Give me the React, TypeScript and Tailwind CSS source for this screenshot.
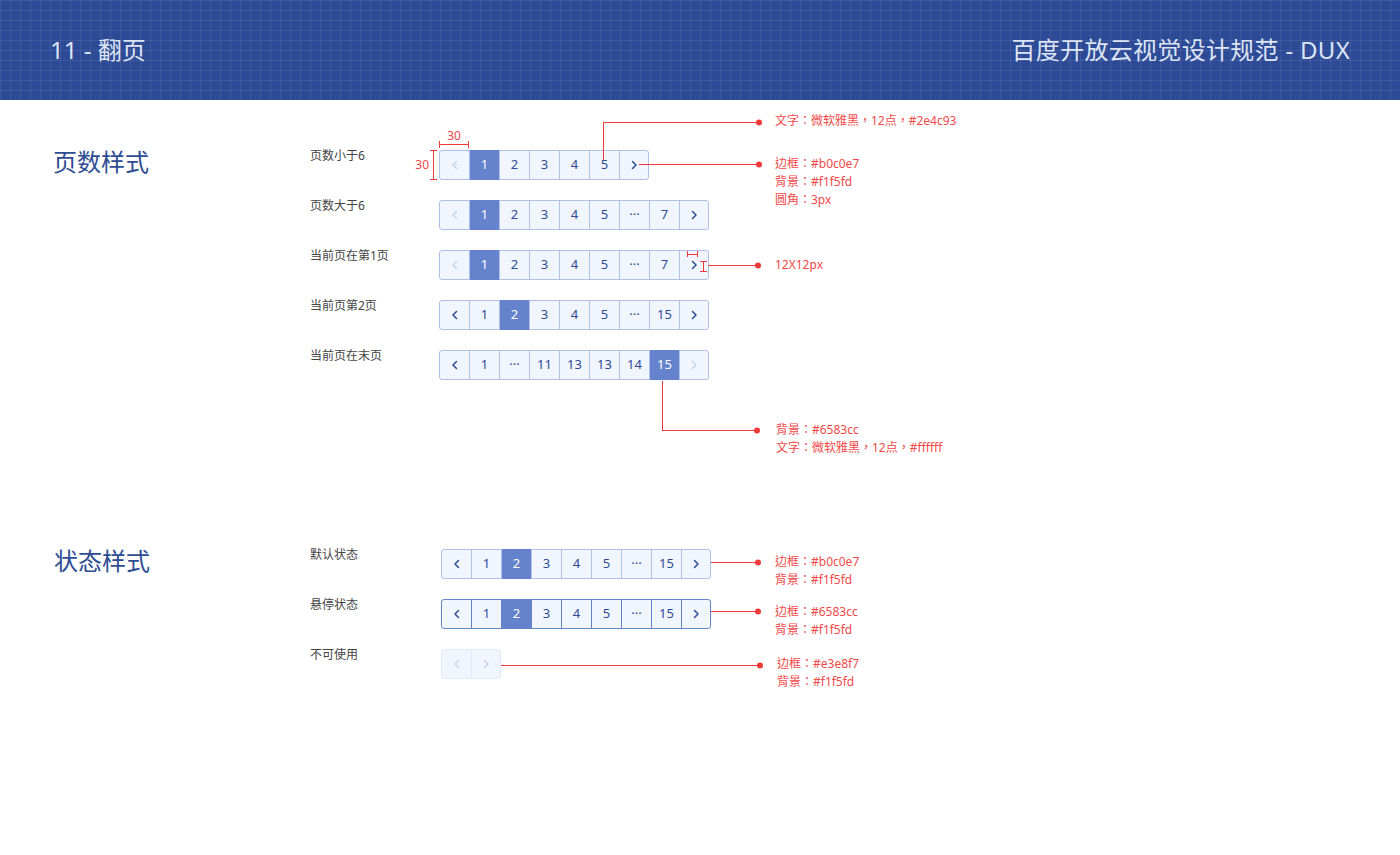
import React from 'react';

type Cell = {
  label?: string;
  arrow?: 'prev' | 'next';
  active?: boolean;
  disabled?: boolean;
};

const FONT = { fontFamily: '"Noto Sans", "Noto Sans CJK SC", sans-serif' };
const NOTE_FONT = { fontFamily: '"Noto Sans", "Noto Sans CJK TC", sans-serif' };
const RED = '#f03a3a';

function Chevron({ dir, disabled }: { dir: 'prev' | 'next'; disabled?: boolean }) {
  const pts = dir === 'next' ? '4.5,2.5 8,6 4.5,9.5' : '7.5,2.5 4,6 7.5,9.5';
  return (
    <svg width="12" height="12" viewBox="0 0 12 12">
      <polyline
        points={pts}
        fill="none"
        stroke={disabled ? '#c9d3ef' : '#2e4c93'}
        strokeWidth="1.5"
        strokeLinecap="round"
        strokeLinejoin="round"
      />
    </svg>
  );
}

function Pager({ cells, border = 'border-[#b0c0e7]' }: { cells: Cell[]; border?: string }) {
  return (
    <div className={`flex h-[30px] rounded-[3px] border bg-[#f1f5fd] ${border}`}>
      {cells.map((c, i) => (
        <div
          key={i}
          className={`flex items-center justify-center text-[13px] ${
            i === 0 ? 'w-[29px]' : i === cells.length - 1 ? `w-[29px] border-l ${border}` : `w-[30px] border-l ${border}`
          } ${
            c.active
              ? '-my-px h-[30px] border-[#6583cc] bg-[#6583cc] text-white'
              : 'h-[28px] text-[#2e4c93]'
          }`}
        >
          {c.arrow ? <Chevron dir={c.arrow} disabled={c.disabled} /> : c.label}
        </div>
      ))}
    </div>
  );
}

const n = (label: string, active = false): Cell => ({ label, active });
const prev = (disabled = false): Cell => ({ arrow: 'prev', disabled });
const next = (disabled = false): Cell => ({ arrow: 'next', disabled });

// 标注线：[x, y, w, h] 矩形；圆点：[cx, cy]
type Rect = [number, number, number, number];

function Leaders({ rects, dots }: { rects: Rect[]; dots: [number, number][] }) {
  return (
    <svg className="pointer-events-none absolute left-0 top-0 overflow-visible" width="1" height="1">
      {rects.map(([x, y, w, h], i) => (
        <rect key={i} x={x} y={y} width={w} height={h} fill={RED} />
      ))}
      {dots.map(([cx, cy], i) => (
        <circle key={i} cx={cx} cy={cy} r="3" fill={RED} />
      ))}
    </svg>
  );
}

function Note({ className, lines }: { className: string; lines: string[] }) {
  return (
    <div className={`absolute text-[12px] leading-[18px] whitespace-nowrap text-[#f24848] ${className}`} style={NOTE_FONT}>
      {lines.map((l) => (
        <div key={l}>{l}</div>
      ))}
    </div>
  );
}

function Row({ label, children, labelW = 'w-[129px]' }: { label: string; children: React.ReactNode; labelW?: string }) {
  return (
    <div className="flex h-[30px] items-start">
      <div className={`${labelW} text-[12px] leading-[12px] text-[#444]`}>{label}</div>
      {children}
    </div>
  );
}

export default function App() {
  return (
    <div className="min-h-[855px] w-[1400px] bg-white" style={FONT}>
      {/* 头部 */}
      <header className="flex h-[100px] items-center justify-between bg-[#2c4a95] bg-[linear-gradient(to_right,rgba(255,255,255,0.08)_1px,transparent_1px),linear-gradient(to_bottom,rgba(255,255,255,0.08)_1px,transparent_1px)] bg-[length:10px_10px] px-[50px] text-[24px] text-[#dde4f4]">
        <div>11 - 翻页</div>
        <div className="tracking-[0.3px]">百度开放云视觉设计规范 - DUX</div>
      </header>

      <main className="pt-[50px]">
        {/* 页数样式 */}
        <section className="relative flex">
          <h2 className="w-[310px] pl-[53px] text-[24px] leading-[24px] text-[#2e4c93]">页数样式</h2>
          <div className="flex flex-col gap-[20px]">
            <Row label="页数小于6">
              <Pager cells={[prev(true), n('1', true), n('2'), n('3'), n('4'), n('5'), next()]} />
            </Row>
            <Row label="页数大于6">
              <Pager cells={[prev(true), n('1', true), n('2'), n('3'), n('4'), n('5'), n('···'), n('7'), next()]} />
            </Row>
            <Row label="当前页在第1页">
              <Pager cells={[prev(true), n('1', true), n('2'), n('3'), n('4'), n('5'), n('···'), n('7'), next()]} />
            </Row>
            <Row label="当前页第2页">
              <Pager cells={[prev(), n('1'), n('2', true), n('3'), n('4'), n('5'), n('···'), n('15'), next()]} />
            </Row>
            <Row label="当前页在末页">
              <Pager cells={[prev(), n('1'), n('···'), n('11'), n('13'), n('13'), n('14'), n('15', true), next(true)]} />
            </Row>
          </div>

          <Leaders
            rects={[
              // 30 宽
              [439, -6, 30, 1], [439, -9, 1, 7], [468, -9, 1, 7],
              // 30 高
              [433, 0, 1, 30], [430, 0, 7, 1], [430, 29, 7, 1],
              // 文字
              [603, -28, 1, 38], [603, -28, 156, 1],
              // 边框
              [639, 14, 120, 1],
              // 12X12
              [687, 104, 11, 1], [687, 101, 1, 6], [697, 101, 1, 6],
              [703, 111, 1, 11], [700, 111, 7, 1], [700, 121, 7, 1],
              [708, 115, 50, 1],
              // 选中
              [662, 231, 1, 50], [662, 280, 95, 1],
            ]}
            dots={[[759, -27.5], [759, 14.5], [758, 115.5], [757, 280.5]]}
          />
          <div className="absolute left-[439px] top-[-20px] w-[30px] text-center text-[12px] leading-[12px] text-[#f24848]">30</div>
          <div className="absolute left-[412px] top-[9px] w-[17px] text-right text-[12px] leading-[12px] text-[#f24848]">30</div>
          <Note className="left-[775px] top-[-38px]" lines={['文字：微软雅黑，12点，#2e4c93']} />
          <Note className="left-[775px] top-[5px]" lines={['边框：#b0c0e7', '背景：#f1f5fd', '圆角：3px']} />
          <Note className="left-[775px] top-[106px]" lines={['12X12px']} />
          <Note className="left-[776px] top-[271px]" lines={['背景：#6583cc', '文字：微软雅黑，12点，#ffffff']} />
        </section>

        {/* 状态样式 */}
        <section className="relative mt-[169px] flex">
          <h2 className="w-[310px] pl-[54px] text-[24px] leading-[24px] text-[#2e4c93]">状态样式</h2>
          <div className="flex flex-col gap-[20px]">
            <Row label="默认状态" labelW="w-[131px]">
              <Pager cells={[prev(), n('1'), n('2', true), n('3'), n('4'), n('5'), n('···'), n('15'), next()]} />
            </Row>
            <Row label="悬停状态" labelW="w-[131px]">
              <Pager border="border-[#6583cc]" cells={[prev(), n('1'), n('2', true), n('3'), n('4'), n('5'), n('···'), n('15'), next()]} />
            </Row>
            <Row label="不可使用" labelW="w-[131px]">
              <Pager border="border-[#e3e8f7]" cells={[prev(true), next(true)]} />
            </Row>
          </div>

          <Leaders
            rects={[[711, 13, 47, 1], [711, 62, 47, 1], [501, 116, 259, 1]]}
            dots={[[758, 13.5], [758, 62.5], [760, 116.5]]}
          />
          <Note className="left-[775px] top-[4px]" lines={['边框：#b0c0e7', '背景：#f1f5fd']} />
          <Note className="left-[775px] top-[54px]" lines={['边框：#6583cc', '背景：#f1f5fd']} />
          <Note className="left-[777px] top-[106px]" lines={['边框：#e3e8f7', '背景：#f1f5fd']} />
        </section>
      </main>
    </div>
  );
}
